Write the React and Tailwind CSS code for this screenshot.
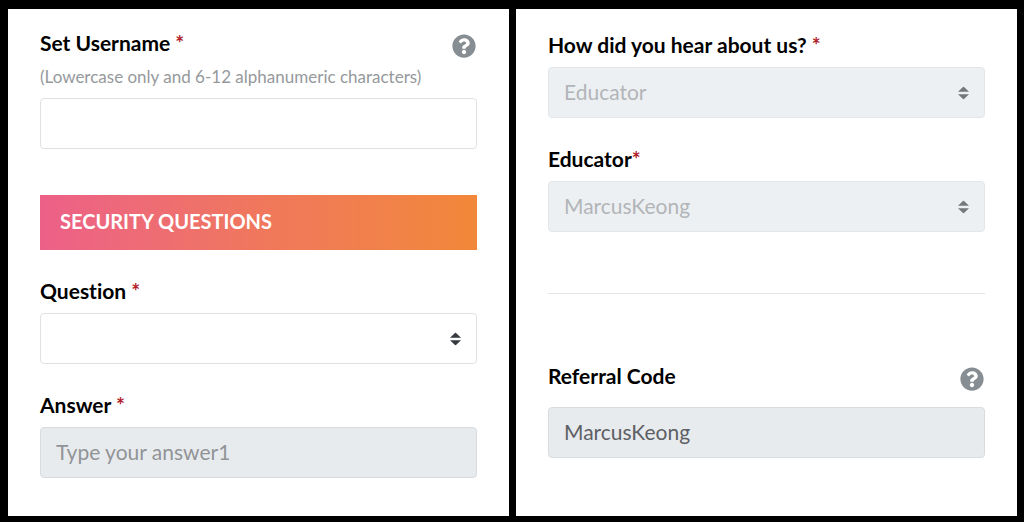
import React, { useState } from 'react';
import { FaQuestionCircle } from 'react-icons/fa';

const Label = ({ htmlFor, required, tight, children }) => (
    <label htmlFor={htmlFor} className="block text-[21px] leading-6 font-bold text-black">
        {children}
        {required && <span className="text-[#b02028]">{tight ? '*' : ' *'}</span>}
    </label>
);

// Label on the left, help button hanging a little lower on the right
const LabelWithHelp = ({ children }) => (
    <div className="flex h-[27px] items-start justify-between pr-px">
        {children}
        <button type="button" aria-label="Help" className="self-end text-[#868e93]">
            <FaQuestionCircle className="size-6" />
        </button>
    </div>
);

const Select = ({ id, options, disabled, ...props }) => (
    <div className="relative mt-2.5">
        <select
            id={id}
            disabled={disabled}
            className="block h-[51px] w-full appearance-none rounded border border-[#dfe1e4] bg-white px-[15px] pb-0.5 text-[21px] text-[#495057] disabled:bg-[#edf0f3] disabled:border-[#e3e7ea] disabled:text-[#b2b5b8] disabled:opacity-100"
            {...props}
        >
            {options.map((option) => (
                <option key={option} value={option}>{option}</option>
            ))}
        </select>
        <svg
            viewBox="0 0 4 5"
            className={`pointer-events-none absolute right-4 top-1/2 h-[13px] w-[11px] -translate-y-1/2 ${disabled ? 'text-[#74787b]' : 'text-[#343a40]'}`}
            fill="currentColor"
            preserveAspectRatio="none"
        >
            <path d="M2 0L0 2h4zm0 5L0 3h4z" />
        </svg>
    </div>
);

const App = () => {
    const [username, setUsername] = useState('');
    const [question, setQuestion] = useState('');

    return (
        <div className="min-h-screen bg-black pt-[9px] pr-[7px] pb-[6px] pl-2 font-['Lato',sans-serif] [font-variant-ligatures:none]">
            <form className="grid grid-cols-2 gap-[7px]">
                {/* Account and security */}
                <section className="bg-white px-8 pt-[22px] pb-[38px]">
                    <LabelWithHelp>
                        <Label htmlFor="username" required>Set Username</Label>
                    </LabelWithHelp>
                    <p id="username-hint" className="mt-[9px] text-[17px] leading-5 text-[#96999c]">
                        (Lowercase only and 6-12 alphanumeric characters)
                    </p>
                    <input
                        id="username"
                        type="text"
                        aria-describedby="username-hint"
                        value={username}
                        onChange={(e) => setUsername(e.target.value)}
                        className="mt-[11px] block h-[51px] w-full rounded border border-[#dfe1e4] px-[15px] pb-0.5 text-[21px] text-[#495057]"
                    />

                    <h2 className="mt-[46px] flex h-[55px] items-center bg-linear-to-r from-[#ec6088] via-[#f0775c] to-[#f28838] px-5 pb-1 text-[20px] font-bold text-white">
                        SECURITY QUESTIONS
                    </h2>

                    <div className="mt-[29px]">
                        <Label htmlFor="question" required>Question</Label>
                        <Select
                            id="question"
                            options={['']}
                            value={question}
                            onChange={(e) => setQuestion(e.target.value)}
                        />
                    </div>

                    <div className="mt-[29px]">
                        <Label htmlFor="answer" required>Answer</Label>
                        <input
                            id="answer"
                            type="text"
                            disabled
                            placeholder="Type your answer1"
                            className="mt-2.5 block h-[51px] w-full rounded border border-[#d9dcdf] bg-[#e8ebee] px-[15px] pb-0.5 text-[21px] placeholder:text-[#919497]"
                        />
                    </div>
                </section>

                {/* Referral */}
                <section className="bg-white px-8 pt-6 pb-[38px]">
                    <Label htmlFor="source" required>How did you hear about us?</Label>
                    <Select id="source" options={['Educator']} disabled />

                    <div className="mt-[29px]">
                        <Label htmlFor="educator" required tight>Educator</Label>
                        <Select id="educator" options={['MarcusKeong']} disabled />
                    </div>

                    <hr className="mt-[61px] mb-[70px] border-[#e3e5e7]" />

                    <LabelWithHelp>
                        <Label htmlFor="referral">Referral Code</Label>
                    </LabelWithHelp>
                    <input
                        id="referral"
                        type="text"
                        disabled
                        value="MarcusKeong"
                        className="mt-4 block h-[51px] w-full rounded border border-[#d9dcdf] bg-[#e8ebee] px-[15px] pb-0.5 text-[21px] text-[#5d6064]"
                    />
                </section>
            </form>
        </div>
    );
};

export default App;
